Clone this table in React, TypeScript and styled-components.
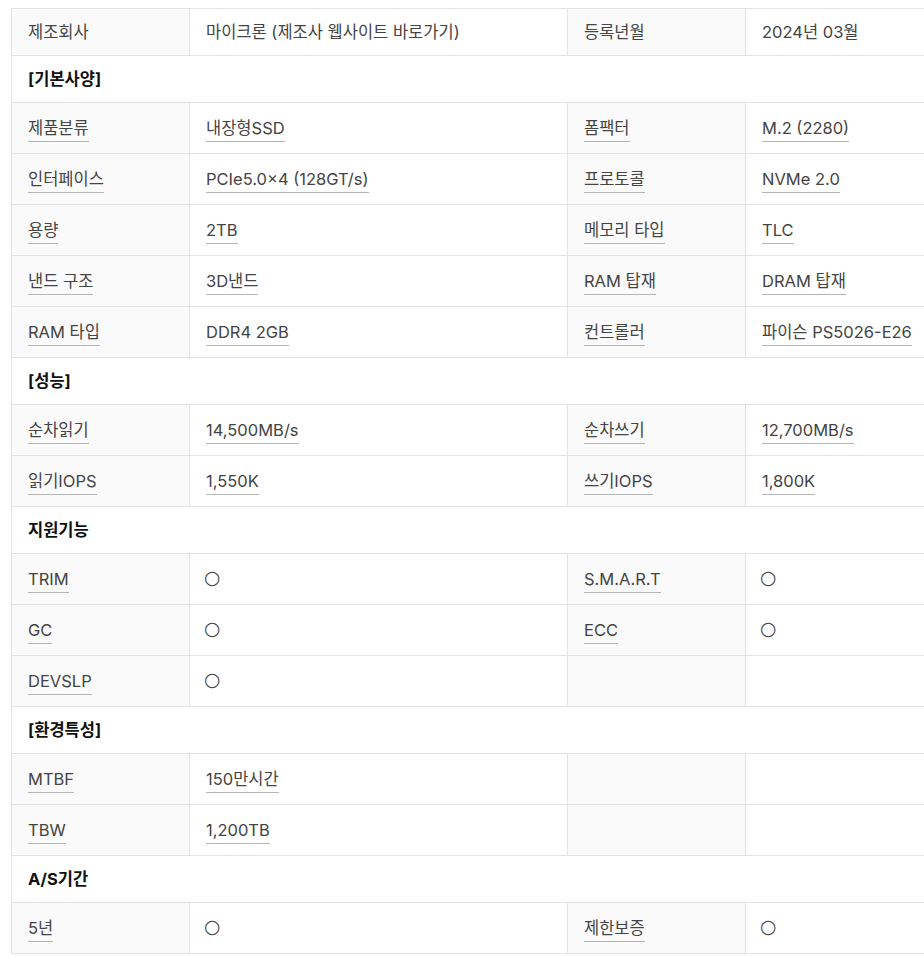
import React from 'react'
import styled, { createGlobalStyle } from 'styled-components'

type Cell = { text?: string; mark?: boolean }
type Row =
  | { kind: 'head'; title: string }
  | { kind: 'spec'; cells: [Cell, Cell, Cell, Cell]; plain?: boolean }

const O: Cell = { text: '○', mark: true }
const t = (text: string): Cell => ({ text })
const empty: Cell = {}

const rows: Row[] = [
  { kind: 'spec', plain: true, cells: [t('제조회사'), t('마이크론 (제조사 웹사이트 바로가기)'), t('등록년월'), t('2024년 03월')] },
  { kind: 'head', title: '[기본사양]' },
  { kind: 'spec', cells: [t('제품분류'), t('내장형SSD'), t('폼팩터'), t('M.2 (2280)')] },
  { kind: 'spec', cells: [t('인터페이스'), t('PCIe5.0×4 (128GT/s)'), t('프로토콜'), t('NVMe 2.0')] },
  { kind: 'spec', cells: [t('용량'), t('2TB'), t('메모리 타입'), t('TLC')] },
  { kind: 'spec', cells: [t('낸드 구조'), t('3D낸드'), t('RAM 탑재'), t('DRAM 탑재')] },
  { kind: 'spec', cells: [t('RAM 타입'), t('DDR4 2GB'), t('컨트롤러'), t('파이슨 PS5026-E26')] },
  { kind: 'head', title: '[성능]' },
  { kind: 'spec', cells: [t('순차읽기'), t('14,500MB/s'), t('순차쓰기'), t('12,700MB/s')] },
  { kind: 'spec', cells: [t('읽기IOPS'), t('1,550K'), t('쓰기IOPS'), t('1,800K')] },
  { kind: 'head', title: '지원기능' },
  { kind: 'spec', cells: [t('TRIM'), O, t('S.M.A.R.T'), O] },
  { kind: 'spec', cells: [t('GC'), O, t('ECC'), O] },
  { kind: 'spec', cells: [t('DEVSLP'), O, empty, empty] },
  { kind: 'head', title: '[환경특성]' },
  { kind: 'spec', cells: [t('MTBF'), t('150만시간'), empty, empty] },
  { kind: 'spec', cells: [t('TBW'), t('1,200TB'), empty, empty] },
  { kind: 'head', title: 'A/S기간' },
  { kind: 'spec', cells: [t('5년'), O, t('제한보증'), O] },
]

const App = () => {
  return (
    <>
      <GlobalStyle />
      <SPage>
        <STable>
          <colgroup>
            <col style={{ width: 178 }} />
            <col style={{ width: 378 }} />
            <col style={{ width: 178 }} />
            <col />
          </colgroup>
          <tbody>
            {rows.map((row, i) =>
              row.kind === 'head' ? (
                <SRow key={i} $height={47}>
                  <SHeadCell colSpan={4}>{row.title}</SHeadCell>
                </SRow>
              ) : (
                <SRow key={i} $height={row.plain ? 47 : 51}>
                  {row.cells.map((cell, j) => (
                    <SCell key={j} $label={j % 2 === 0}>
                      {cell.mark ? (
                        <SMark>{cell.text}</SMark>
                      ) : cell.text ? (
                        row.plain ? (
                          <span>{cell.text}</span>
                        ) : (
                          <SDotted>{cell.text}</SDotted>
                        )
                      ) : null}
                    </SCell>
                  ))}
                </SRow>
              )
            )}
          </tbody>
        </STable>
      </SPage>
    </>
  )
}

const GlobalStyle = createGlobalStyle`
  html, body {
    margin: 0;
    background: #fff;
    overflow: hidden;
  }
  body {
    font-family: Inter, "Noto Sans CJK KR", sans-serif;
  }
`

const SPage = styled.div`
  padding: 8px 0 0 11px;
`

const STable = styled.table`
  border-collapse: collapse;
  table-layout: fixed;
  width: 913px;
  font-size: 16.5px;
  color: #444;
`

const SRow = styled.tr<{ $height: number }>`
  height: ${(p) => p.$height}px;
`

const SCell = styled.td<{ $label: boolean }>`
  border: 1px solid #e3e3e3;
  padding: 0 16px;
  vertical-align: middle;
  white-space: nowrap;
  overflow: hidden;
  background: ${(p) => (p.$label ? '#fafafa' : '#fff')};
  line-height: 22px;
  &:last-child {
    border-right: none;
  }
`

const SHeadCell = styled.td`
  border: 1px solid #e3e3e3;
  border-right: none;
  padding: 0 16px;
  vertical-align: middle;
  font-weight: 700;
  color: #111;
  line-height: 22px;
  background: #fff;
`

const SDotted = styled.span`
  display: inline-block;
  vertical-align: middle;
  margin-top: 3px;
  padding-bottom: 2px;
  border-bottom: 1px solid #b5b5b5;
`

const SMark = styled.span`
  display: inline-block;
  vertical-align: middle;
  margin-left: -2px;
  padding-bottom: 4px;
  font-family: "DejaVu Sans", sans-serif;
  font-size: 19px;
  line-height: 22px;
  color: #444;
`

export default App
